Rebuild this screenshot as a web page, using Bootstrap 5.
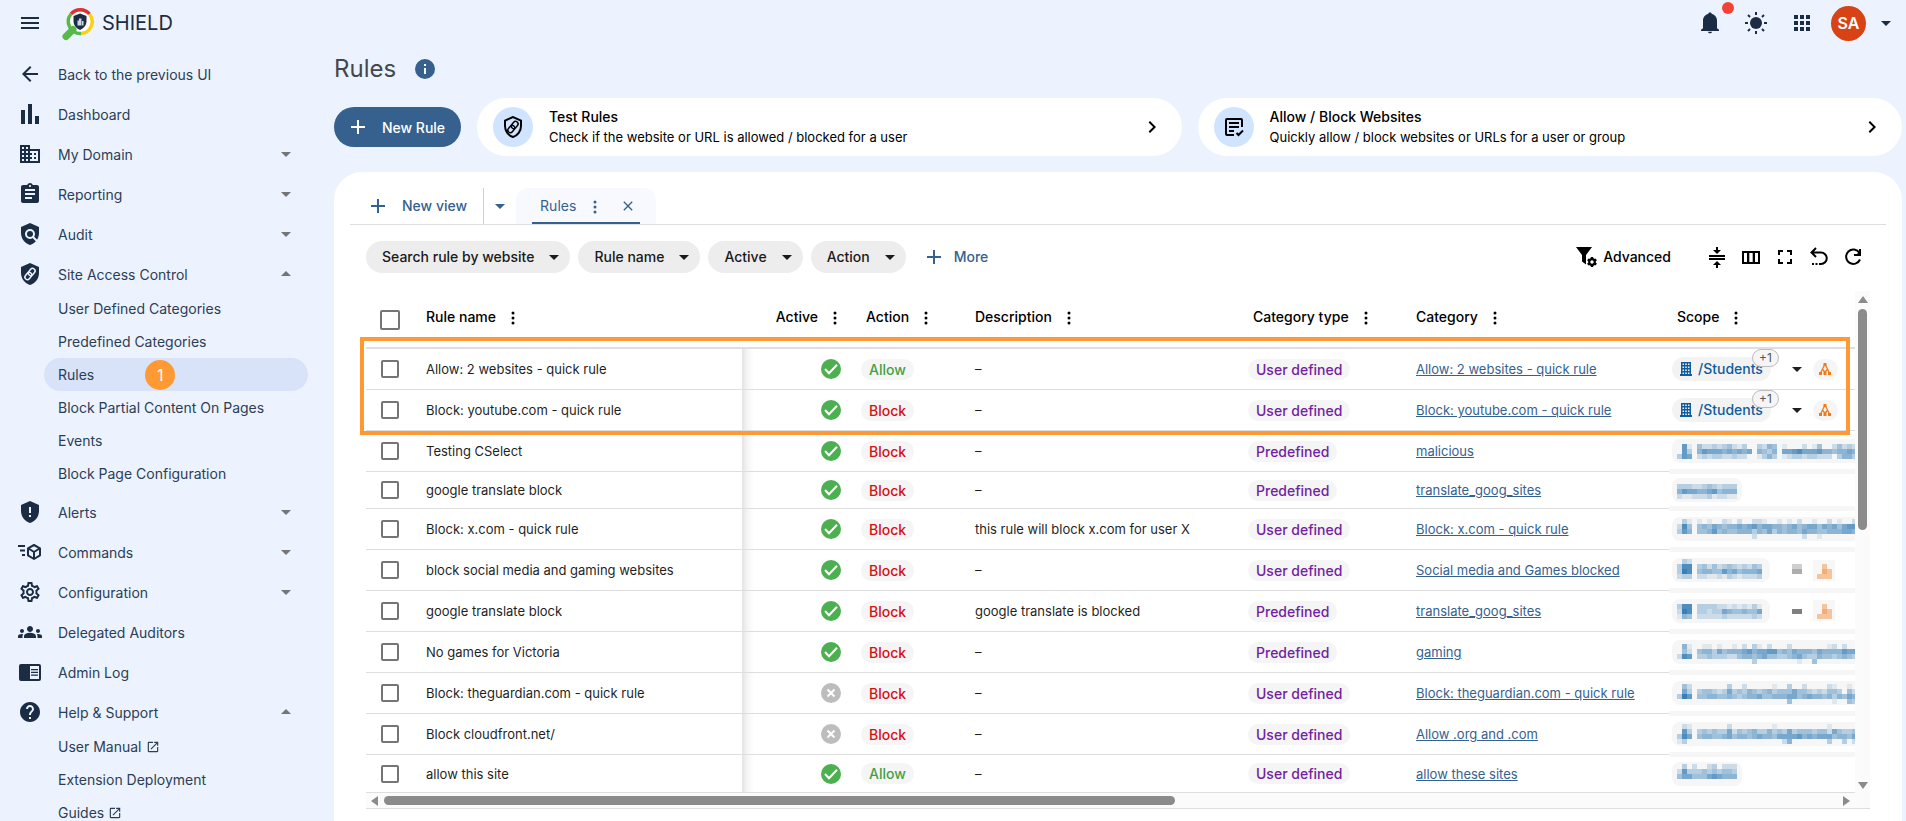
<!DOCTYPE html>
<html lang="en">
<head>
<meta charset="utf-8">
<meta name="viewport" content="width=device-width, initial-scale=1">
<title>SHIELD - Rules</title>
<link href="https://cdn.jsdelivr.net/npm/bootstrap@5.3.0/dist/css/bootstrap.min.css" rel="stylesheet">
<style>
:root{--navy:#1b2d45;--blue:#36618e;--page:#ecf3ff;--line:#dedede;--mark:#ff9933}
body{background:var(--page);font-family:Inter,"Liberation Sans",sans-serif;font-size:14px;line-height:20px;color:#000}
svg{display:block;flex:none;fill:currentColor}
svg.logo{fill:none}
.i24{width:24px;height:24px}.i16{width:16px;height:16px}.i14{width:14px;height:14px}
button{color:inherit}
.plain{border:0;background:none;padding:0}
.medium{font-weight:500}
.topbar{height:46px;color:var(--navy);padding:0 8px 0 18px}
.brand{font-size:20px;line-height:24px;color:var(--navy);text-decoration:none;gap:6px}
.tools{gap:22px}
.dot{position:absolute;width:12px;height:12px;border-radius:50%;background:#f44336;top:-9px;right:-12px}
.account{gap:8px;margin-left:-5px}
.avatar{width:35px;height:35px;border-radius:50%;background:#d84315;color:#fff;font-weight:600;font-size:16px}
.side{width:334px;padding:10px 26px 0 18px;color:var(--navy)}
.side li{margin-bottom:4px}
.side a{color:#2b3e56;text-decoration:none}
.side .top-item{height:36px;gap:16px;padding-right:10px}
.side .top-item span{padding-top:2px}
.side .top-item svg{color:var(--navy)}
.side .top-item .caret{color:#757575}
.side .sub-item{height:33px;margin-left:26px;padding-left:14px;border-radius:17px;gap:4px}
.side .sub-item.on{background:#d8e2f9}
.side .sub-list li{margin:0}
.step{width:30px;height:30px;border-radius:50%;background:var(--mark);color:#fff;font-size:16px;margin-left:47px}
.work{padding-right:4px}
.page-title{font-size:24px;line-height:30px;font-weight:400;color:#44474e;height:46px;gap:17px}
.page-title svg{color:var(--blue)}
.actions{margin-top:6px}
.btn-new{width:127px;height:40px;border-radius:20px;background:var(--blue);color:#fff;font-size:14px;font-weight:500;gap:12px;padding:0 4px 0 0}
.btn-new:hover{background:#2a4f76;color:#fff}
.quick{flex:1 1 0;min-width:0;height:58px;border-radius:29px;background:#fff;color:#000;text-decoration:none;padding:0 18px 0 16px;gap:16px}
.quick strong{font-weight:500}
.quick .desc{font-size:13px;line-height:21px}
.quick .disc{width:40px;height:40px;border-radius:50%;background:#d1e4ff}
.panel{background:#fff;border-radius:28px 28px 0 0;padding:16px 16px 0;margin-top:16px}
.tabs{border-bottom:1px solid var(--line);color:var(--blue);height:37px}
.newview{padding:0 16px 0 16px;gap:12px;border-right:1px solid #d0d0d0;height:36px}
.view{width:140px;height:36px;background:#f8f9ff;border-radius:12px 12px 0 0;padding:0 16px}
.view .in{border-bottom:2px solid var(--blue);height:36px;padding:2px 0 0 8px}
.view .in button+button{margin-left:21px}
.view .in a+button{margin-left:15px}
.filters{padding:16px 21px 18px 16px}
.filters .blue{color:var(--blue)}
.iconset{gap:10px}
.chip{height:32px;border-radius:16px;background:#ededed;border:0;color:#1a1a1a;padding:0 4px 0 16px;gap:8px;font-weight:500}
.gridbox{margin:0 16px;position:relative}
.rules{width:100%;table-layout:fixed;border-collapse:separate;border-spacing:0;font-size:13px;line-height:18px}
.rules .c-pick{width:46px}.rules .c-name{width:330px}.rules .c-active{width:110px}.rules .c-action{width:109px}
.rules .c-type{width:163px}.rules .c-cat{width:267px}.rules .c-scope{width:186px}
.rules th{height:58px;border-bottom:2px solid var(--line);font-weight:500;font-size:14px;padding:0 0 4px 14px;white-space:nowrap}
.rules th span{gap:13px}
.rules td{height:41px;border-bottom:1px solid var(--line);padding:0 0 0 14px;white-space:nowrap;color:#1f1f1f}
.rules tr.short td{height:37px}
.rules tr.short:last-child td{height:38px}
.rules .pick{padding:0 0 0 15px;vertical-align:middle}
.rules .pillcell{padding-left:9px}
.rules td.state{padding-right:9px;padding-left:0;background:linear-gradient(90deg,#e3e3e3,#f4f4f4 5px,#fff) 0 0/12px 100% no-repeat}
.rules th.scope{padding-left:8px}
.rules td.scope{padding-left:3px}
.rules td.hidden-scope{border-bottom-color:#f6f6f6;box-shadow:inset 0 -2px #f6f6f6,0 2px #f6f6f6}
.rules th.state{padding-right:13px;padding-left:0}
.rules a{color:var(--blue);text-decoration:underline}
.tick{appearance:none;display:block;width:18px;height:18px;border:2px solid #757575;border-radius:2px;margin:0;background:#fff}
.tick:checked{background:var(--blue)}
th .tick{width:20px;height:20px;margin:2px 0 0 -1px}
.pill{display:inline-block;height:21px;line-height:22px;border-radius:11px;background:#f5f5f5;padding:0 8px;font-size:14px;font-weight:500}
.allow{color:#43a047}.block{color:#d50f12}.kind{color:#7222a0}
.who{height:24px;border-radius:12px;background:#f3f3f3;color:#0f5c9e;padding:0 8px;gap:6px;font-size:14px;font-weight:500;position:relative}
.who+button{margin:0 4px 0 14px}
.more{position:absolute;right:-8px;top:-8px;height:18px;border:1px solid #bdbdbd;border-radius:9px;background:#f5f5f5;color:#555;font-size:12px;font-weight:400;line-height:16px;padding:0 6px}
.tree{width:25px;height:21px;border-radius:11px;background:#f5f5f5;color:#ef7a1a}
.frame{position:absolute;left:-6px;right:5px;top:46px;height:98px;border:4px solid var(--mark);pointer-events:none}
.vbar{width:15px;background:#fbfbfb;padding:5px 0 4px;color:#8b8b8b}
.vbar .thumb{width:9px;height:221px;border-radius:5px;background:#8b8b8b;margin-top:6px}
.hbar{height:16px;background:#fbfbfb;border-bottom:1px solid var(--line);padding:0 20px 0 5px;color:#8b8b8b}
.hbar .thumb{width:calc(54% - 8px);height:9px;border-radius:5px;background:#8b8b8b;margin-left:6px}
</style>
</head>
<body class="vh-100 overflow-hidden d-flex flex-column">
<svg width="0" height="0" class="position-absolute" aria-hidden="true"><defs>
<symbol id="menu" viewBox="0 0 24 24"><path d="M3 18h18v-2H3v2zm0-5h18v-2H3v2zm0-7v2h18V6H3z"/></symbol>
<symbol id="back" viewBox="0 0 24 24"><path d="M20 11H7.83l5.59-5.59L12 4l-8 8 8 8 1.41-1.41L7.83 13H20v-2z"/></symbol>
<symbol id="bars" viewBox="0 0 24 24"><path d="M3 8h4v14H3zM10 2h4v20h-4zM17 14h4v8h-4z"/></symbol>
<symbol id="domain" viewBox="0 0 24 24"><path d="M12 7V3H2v18h20V7H12zM6 19H4v-2h2v2zm0-4H4v-2h2v2zm0-4H4V9h2v2zm0-4H4V5h2v2zm4 12H8v-2h2v2zm0-4H8v-2h2v2zm0-4H8V9h2v2zm0-4H8V5h2v2zm10 12h-8v-2h2v-2h-2v-2h2v-2h-2V9h8v10zm-2-8h-2v2h2v-2zm0 4h-2v2h2v-2z"/></symbol>
<symbol id="report" viewBox="0 0 24 24"><path d="M19 3h-4.18C14.4 1.84 13.3 1 12 1c-1.3 0-2.4.84-2.82 2H5c-1.1 0-2 .9-2 2v14c0 1.1.9 2 2 2h14c1.1 0 2-.9 2-2V5c0-1.1-.9-2-2-2zm-7 0c.55 0 1 .45 1 1s-.45 1-1 1-1-.45-1-1 .45-1 1-1zm2 14H7v-2h7v2zm3-4H7v-2h10v2zm0-4H7V7h10v2z"/></symbol>
<symbol id="audit" viewBox="0 0 24 24"><path d="M12 1 3 5v6c0 5.55 3.84 10.74 9 12 5.16-1.26 9-6.45 9-12V5l-9-4z"/><circle cx="12" cy="12" r="4" fill="none" stroke="#ecf3ff" stroke-width="2"/><path d="m14.500 14.500 5 5" stroke="#ecf3ff" stroke-width="2"/></symbol>
<symbol id="chain" viewBox="0 0 24 24"><g fill="none" stroke-width="1.500" transform="rotate(-50 12 12)"><rect x="5.500" y="9.500" width="7.800" height="5" rx="2.500"/><rect x="10.700" y="9.500" width="7.800" height="5" rx="2.500"/></g></symbol>
<symbol id="access" viewBox="0 0 24 24"><path d="M12 1 3 5v6c0 5.55 3.84 10.74 9 12 5.16-1.26 9-6.45 9-12V5l-9-4z"/><use href="#chain" stroke="#ecf3ff"/></symbol>
<symbol id="accessline" viewBox="0 0 24 24"><path d="M12 2 4 5.600V11c0 5 3.400 9.600 8 11 4.600-1.400 8-6 8-11V5.600z" fill="none" stroke="currentColor" stroke-width="2"/><use href="#chain" stroke="currentColor"/></symbol>
<symbol id="alert" viewBox="0 0 24 24"><path d="M12 1 3 5v6c0 5.55 3.84 10.74 9 12 5.16-1.26 9-6.45 9-12V5l-9-4z"/><path d="M11 7h2v6h-2zM11 15h2v2h-2z" fill="#ecf3ff"/></symbol>
<symbol id="command" viewBox="0 0 24 24"><path d="M0 5h7v2H0zM2 9.500h5v2H2zM4 14h3v2H4z"/><path d="m16 5 6 3.300v7L16 19l-6-3.700v-7zM10.500 8.500 16 12l5.500-3.500M16 12v7" fill="none" stroke="currentColor" stroke-width="2" stroke-linejoin="round"/></symbol>
<symbol id="gear" viewBox="0 0 24 24"><path d="M19.43 12.98c.04-.32.07-.64.07-.98 0-.34-.03-.66-.07-.98l2.11-1.65c.19-.15.24-.42.12-.64l-2-3.46c-.09-.16-.26-.25-.44-.25-.06 0-.12.01-.17.03l-2.49 1c-.52-.4-1.08-.73-1.69-.98l-.38-2.65C14.46 2.180 14.250 2 14 2h-4c-.25 0-.46.18-.49.42l-.38 2.65c-.61.25-1.170.59-1.690.98l-2.490-1c-.06-.02-.12-.03-.18-.03-.17 0-.34.09-.43.25l-2 3.460c-.13.22-.07.49.12.64l2.110 1.650c-.04.32-.07.65-.07.98 0 .33.03.66.07.98l-2.110 1.650c-.19.15-.24.42-.12.64l2 3.460c.09.16.26.25.44.25.06 0 .12-.01.17-.03l2.490-1c.52.4 1.080.73 1.690.98l.38 2.650c.03.24.24.42.49.42h4c.25 0 .46-.18.49-.42l.38-2.650c.61-.25 1.170-.59 1.690-.98l2.490 1c.06.02.12.03.18.03.17 0 .34-.09.43-.25l2-3.460c.12-.22.07-.49-.12-.64l-2.110-1.650zm-1.980-1.710c.04.31.05.52.05.73 0 .21-.02.43-.05.73l-.14 1.130.89.7 1.080.84-.7 1.210-1.270-.51-1.040-.42-.9.68c-.43.32-.84.56-1.250.73l-1.060.43-.16 1.130-.2 1.350h-1.400l-.19-1.350-.16-1.130-1.060-.43c-.43-.18-.83-.41-1.230-.71l-.91-.7-1.060.43-1.270.51-.7-1.210 1.080-.84.89-.7-.14-1.130c-.03-.31-.05-.54-.05-.74s.02-.43.05-.73l.14-1.130-.89-.7-1.080-.84.7-1.210 1.270.51 1.040.42.9-.68c.43-.32.84-.56 1.250-.73l1.060-.43.16-1.130.2-1.350h1.390l.19 1.350.16 1.130 1.060.43c.43.18.83.41 1.230.71l.91.7 1.060-.43 1.270-.51.7 1.210-1.070.85-.89.7.14 1.130zM12 8c-2.210 0-4 1.790-4 4s1.790 4 4 4 4-1.790 4-4-1.790-4-4-4zm0 6c-1.100 0-2-.9-2-2s.9-2 2-2 2 .9 2 2-.9 2-2 2z"/></symbol>
<symbol id="groups" viewBox="0 0 24 24"><path d="M12 12.750c1.630 0 3.070.39 4.240.9 1.080.48 1.760 1.560 1.760 2.730V18H6v-1.610c0-1.180.68-2.260 1.760-2.730 1.170-.52 2.610-.91 4.240-.91zM4 13c1.100 0 2-.9 2-2s-.9-2-2-2-2 .9-2 2 .9 2 2 2zm1.130 1.100c-.37-.06-.74-.1-1.130-.1-.99 0-1.930.21-2.780.58C.48 14.900 0 15.620 0 16.430V18h4.500v-1.610c0-.83.23-1.610.63-2.290zM20 13c1.100 0 2-.9 2-2s-.9-2-2-2-2 .9-2 2 .9 2 2 2zm4 3.430c0-.81-.48-1.530-1.220-1.850-.85-.37-1.790-.58-2.780-.58-.39 0-.76.04-1.130.1.4.68.63 1.460.63 2.290V18H24v-1.570zM12 6c1.660 0 3 1.340 3 3s-1.340 3-3 3-3-1.340-3-3 1.340-3 3-3z"/></symbol>
<symbol id="reader" viewBox="0 0 24 24"><path fill-rule="evenodd" d="M3 4h18a2 2 0 0 1 2 2v13a2 2 0 0 1-2 2H3a2 2 0 0 1-2-2V6a2 2 0 0 1 2-2zm9 2v13h9V6zm1 3h7v1.300h-7zm0 2.700h7V13h-7zm0 2.800h7v1.300h-7z"/></symbol>
<symbol id="help" viewBox="0 0 24 24"><path d="M12 2C6.480 2 2 6.480 2 12s4.480 10 10 10 10-4.480 10-10S17.520 2 12 2zm1 17h-2v-2h2v2zm2.070-7.750l-.9.92C13.450 12.900 13 13.500 13 15h-2v-.5c0-1.100.45-2.100 1.170-2.830l1.240-1.260c.37-.36.59-.86.59-1.410 0-1.100-.9-2-2-2s-2 .9-2 2H8c0-2.210 1.790-4 4-4s4 1.790 4 4c0 .88-.36 1.680-.93 2.250z"/></symbol>
<symbol id="open" viewBox="0 0 24 24"><path d="M19 19H5V5h7V3H5c-1.110 0-2 .9-2 2v14c0 1.100.89 2 2 2h14c1.100 0 2-.9 2-2v-7h-2v7zM14 3v2h3.590l-9.830 9.830 1.410 1.410L19 6.410V10h2V3h-7z"/></symbol>
<symbol id="down" viewBox="0 0 24 24"><path d="m7 10 5 5 5-5z"/></symbol>
<symbol id="up" viewBox="0 0 24 24"><path d="m7 14 5-5 5 5z"/></symbol>
<symbol id="plus" viewBox="0 0 24 24"><path d="M19 13h-6v6h-2v-6H5v-2h6V5h2v6h6v2z"/></symbol>
<symbol id="close" viewBox="0 0 24 24"><path d="M19 6.410 17.590 5 12 10.590 6.410 5 5 6.410 10.590 12 5 17.590 6.410 19 12 13.410 17.590 19 19 17.590 13.410 12z"/></symbol>
<symbol id="dots" viewBox="0 0 8 20"><circle cx="4" cy="6" r="1.500"/><circle cx="4" cy="11" r="1.500"/><circle cx="4" cy="16" r="1.500"/></symbol>
<symbol id="bell" viewBox="0 0 24 24"><path d="M12 1.500c-1 0-1.500.5-1.700 1.300C7.200 3.700 5 6.300 5 9.500v7.700l-2 1.600V20h18v-1.200l-2-1.600V9.500c0-3.200-2.200-5.800-5.300-6.700-.2-.8-.7-1.300-1.700-1.300zM10 20.800h4c0 1-1 1.500-2 1.500s-2-.5-2-1.500z"/></symbol>
<symbol id="sun" viewBox="0 0 24 24"><circle cx="12" cy="12" r="6"/><path d="M12 1v3M12 20v3M1 12h3M20 12h3M4 4l2 2M18 18l2 2M20 4l-2 2M6 18l-2 2" stroke="currentColor" stroke-width="2"/></symbol>
<symbol id="apps" viewBox="0 0 24 24"><path d="M4 4h4v4H4zM10 4h4v4h-4zM16 4h4v4h-4zM4 10h4v4H4zM10 10h4v4h-4zM16 10h4v4h-4zM4 16h4v4H4zM10 16h4v4h-4zM16 16h4v4h-4z"/></symbol>
<symbol id="info" viewBox="0 0 24 24"><circle cx="12" cy="12" r="10"/><path d="M11 7h2v2h-2zM11 11h2v6h-2z" fill="#fff"/></symbol>
<symbol id="next" viewBox="0 0 24 24"><path d="M10 6 8.590 7.410 13.170 12l-4.580 4.590L10 18l6-6z"/></symbol>
<symbol id="list" viewBox="0 0 24 24"><path d="M20 12V5a1 1 0 0 0-1-1H5a1 1 0 0 0-1 1v14a1 1 0 0 0 1 1h7M7 8h10M7 12h10M7 16h5M14.500 18l2 2 4.500-4.500" fill="none" stroke="currentColor" stroke-width="2"/></symbol>
<symbol id="funnel" viewBox="0 0 24 24"><path d="M1 2h16l-6 8v9.500l-4-3V10z"/><circle cx="17" cy="17" r="2.800" fill="none" stroke="currentColor" stroke-width="2.200"/><path d="M17 12v2M17 20v2M12.700 14.500l1.700 1M19.600 18.500l1.700 1M12.700 19.500l1.700-1M19.600 15.500l1.700-1" stroke="currentColor" stroke-width="2.400"/></symbol>
<symbol id="dense" viewBox="0 0 24 24"><path d="M4 10h16v2H4zM4 13h16v2H4zM11 2h2v3h3l-4 4-4-4h3zM11 23h2v-3h3l-4-4-4 4h3z"/></symbol>
<symbol id="columns" viewBox="0 0 24 24"><path fill-rule="evenodd" d="M3 6h18v13H3zm2 2v9h3V8zm5.300 0v9h3.400V8zM16 8v9h3V8z"/></symbol>
<symbol id="full" viewBox="0 0 24 24"><path d="M5 10V5h5v2H7v3zM14 5h5v5h-2V7h-3zM5 14h2v3h3v2H5zM17 14h2v5h-5v-2h3z"/></symbol>
<symbol id="undo" viewBox="0 0 24 24"><path d="M9 3 4.500 7.500 9 12M5 7.500h9a5.700 5.700 0 0 1 0 11.500h-2" fill="none" stroke="currentColor" stroke-width="2"/><path d="M5 18h2v2H5zM8.500 18h2v2h-2z"/></symbol>
<symbol id="reload" viewBox="0 0 24 24"><path d="M18.500 8A7.200 7.200 0 1 0 19 14.500" fill="none" stroke="currentColor" stroke-width="2"/><path d="M20 4v7h-7v-2h3l2-2V4z"/></symbol>
<symbol id="ok" viewBox="0 0 24 24"><circle cx="12" cy="12" r="10" fill="#4caf50"/><path d="m6 12 4 4.200 8-8.500" fill="none" stroke="#fff" stroke-width="2"/></symbol>
<symbol id="off" viewBox="0 0 24 24"><circle cx="12" cy="12" r="10" fill="#bdbdbd"/><path d="m8.500 8.500 7 7m0-7-7 7" fill="none" stroke="#fff" stroke-width="2"/></symbol>
<symbol id="tower" viewBox="0 0 12 14"><path fill-rule="evenodd" d="M1 0h10v12h1v2H0v-2h1zm1.500 1.500v1.500H4V1.500zm2.700 0v1.500h1.600V1.500zm2.800 0v1.500h1.500V1.500zM2.500 4.500V6H4V4.500zm2.700 0V6h1.600V4.500zm2.800 0V6h1.500V4.500zM2.500 7.500V9H4V7.500zm2.700 0V9h1.600V7.500zm2.800 0V9h1.500V7.500zM2.500 10.500V12H4v-1.500zm2.700 0V12h1.600v-1.500zm2.800 0V12h1.500v-1.500z"/></symbol>
<symbol id="tree" viewBox="0 0 12 12"><path d="M4.500 0h3v3h-3zM0 9h3v3H0zM4.500 9h3v3h-3zM9 9h3v3H9z"/><path d="M5.500 2 1.800 9.500M6.500 2l3.700 7.500M3.800 6.500 6 9.500M8.200 6.500 6 9.500" fill="none" stroke="currentColor" stroke-width="1.300"/></symbol>
</defs></svg>

<header class="topbar d-flex align-items-center flex-shrink-0">
  <button class="plain" type="button" aria-label="Menu"><svg class="i24"><use href="#menu"/></svg></button>
  <a class="brand d-flex align-items-center ms-3" href="#">
    <svg class="logo" width="38" height="36" viewBox="58 4 38 36">
      <circle cx="80" cy="20.500" r="12" fill="#fff"/>
      <path d="M66 35.500l7-7" stroke="#57b947" stroke-width="7" stroke-linecap="round"/>
      <path d="M71 13a12 12 0 0 1 18.500 0" stroke="#e0302e" stroke-width="3.500"/>
      <path d="M89.500 13A12 12 0 0 1 81 32.500" stroke="#fbd010" stroke-width="3.500"/>
      <path d="M81 32.500A12 12 0 0 1 71 13" stroke="#57b947" stroke-width="3.500"/>
      <path d="M80 12.500l6.500 2.500v5c0 4-2.800 7.500-6.500 9-3.700-1.500-6.500-5-6.500-9v-5z" fill="#1b2d45"/>
      <path d="M77.500 19.500h1.500v-2h2.500v7h-4zM82 20h1.500v4.500H82z" fill="#cfd6de"/>
    </svg>
    <span>SHIELD</span>
  </a>
  <div class="tools d-flex align-items-center ms-auto">
    <button class="plain position-relative" type="button" aria-label="Notifications"><svg class="i24"><use href="#bell"/></svg><span class="dot"></span></button>
    <button class="plain" type="button" aria-label="Theme"><svg class="i24"><use href="#sun"/></svg></button>
    <button class="plain" type="button" aria-label="Apps"><svg class="i24"><use href="#apps"/></svg></button>
    <button class="plain account d-flex align-items-center" type="button" aria-label="Account"><span class="avatar d-flex align-items-center justify-content-center">SA</span><svg class="i24"><use href="#down"/></svg></button>
  </div>
</header>

<div class="d-flex flex-grow-1 overflow-hidden">
  <nav class="side flex-shrink-0 overflow-hidden">
    <ul class="list-unstyled m-0" id="nav"></ul>
  </nav>
  <main class="work flex-grow-1 d-flex flex-column overflow-hidden">
    <h1 class="page-title d-flex align-items-center mb-0">Rules <svg class="i24"><use href="#info"/></svg></h1>
    <div class="actions d-flex align-items-center gap-3">
      <button class="btn btn-new d-flex align-items-center justify-content-center" type="button"><svg class="i24"><use href="#plus"/></svg>New Rule</button>
      <a class="quick d-flex align-items-center" href="#">
        <span class="disc d-flex align-items-center justify-content-center"><svg class="i24"><use href="#accessline"/></svg></span>
        <span class="flex-grow-1"><strong class="d-block">Test Rules</strong><span class="desc d-block">Check if the website or URL is allowed / blocked for a user</span></span>
        <svg class="i24"><use href="#next"/></svg>
      </a>
      <a class="quick d-flex align-items-center" href="#">
        <span class="disc d-flex align-items-center justify-content-center"><svg class="i24"><use href="#list"/></svg></span>
        <span class="flex-grow-1"><strong class="d-block">Allow / Block Websites</strong><span class="desc d-block">Quickly allow / block websites or URLs for a user or group</span></span>
        <svg class="i24"><use href="#next"/></svg>
      </a>
    </div>
    <section class="panel flex-grow-1">
      <div class="tabs d-flex">
        <button class="plain newview medium d-flex align-items-center" type="button"><svg class="i24"><use href="#plus"/></svg>New view</button>
        <button class="plain px-1" type="button" aria-label="View options"><svg class="i24"><use href="#down"/></svg></button>
        <div class="view"><div class="in d-flex align-items-center"><a href="#" class="text-reset text-decoration-none">Rules</a><button class="plain" type="button" aria-label="View menu"><svg width="8" height="20"><use href="#dots"/></svg></button><button class="plain" type="button" aria-label="Close view"><svg class="i16"><use href="#close"/></svg></button></div></div>
      </div>
      <div class="filters d-flex align-items-center gap-2">
        <button class="chip d-flex align-items-center" type="button">Search rule by website<svg class="i24"><use href="#down"/></svg></button>
        <button class="chip d-flex align-items-center" type="button">Rule name<svg class="i24"><use href="#down"/></svg></button>
        <button class="chip d-flex align-items-center" type="button">Active<svg class="i24"><use href="#down"/></svg></button>
        <button class="chip d-flex align-items-center" type="button">Action<svg class="i24"><use href="#down"/></svg></button>
        <button class="plain blue medium d-flex align-items-center ms-2 gap-2" type="button"><svg class="i24"><use href="#plus"/></svg>More</button>
        <div class="iconset d-flex align-items-center ms-auto">
          <button class="plain medium d-flex align-items-center gap-1 me-4" type="button"><svg class="i24"><use href="#funnel"/></svg>Advanced</button>
          <button class="plain" type="button" aria-label="Row density"><svg class="i24"><use href="#dense"/></svg></button>
          <button class="plain" type="button" aria-label="Columns"><svg class="i24"><use href="#columns"/></svg></button>
          <button class="plain" type="button" aria-label="Full screen"><svg class="i24"><use href="#full"/></svg></button>
          <button class="plain" type="button" aria-label="Undo"><svg class="i24"><use href="#undo"/></svg></button>
          <button class="plain" type="button" aria-label="Refresh"><svg class="i24"><use href="#reload"/></svg></button>
        </div>
      </div>
      <div class="gridbox">
        <div class="d-flex">
          <div class="flex-grow-1 position-relative">
            <div class="overflow-hidden">
              <table class="rules">
                <colgroup><col class="c-pick"><col class="c-name"><col class="c-active"><col class="c-action"><col><col class="c-type"><col class="c-cat"><col class="c-scope"></colgroup>
                <thead><tr id="head"></tr></thead>
                <tbody id="body"></tbody>
              </table>
            </div>
            <div class="frame"></div>
          </div>
          <div class="vbar d-flex flex-column align-items-center flex-shrink-0">
            <svg width="10" height="7"><path d="M5 0l5 7H0z"/></svg>
            <div class="thumb"></div>
            <svg class="mt-auto" width="10" height="7"><path d="M5 7l5-7H0z"/></svg>
          </div>
        </div>
        <div class="hbar d-flex align-items-center">
          <svg width="7" height="10"><path d="M0 5l7-5v10z"/></svg>
          <div class="thumb"></div>
          <svg class="ms-auto" width="7" height="10"><path d="M7 5L0 0v10z"/></svg>
        </div>
      </div>
    </section>
  </main>
</div>
<script>
const icon = (n, c = 'i24') => `<svg class="${c}"><use href="#${n}"/></svg>`;

// Navigation: icon, label, expanded state, children
const nav = [
  ['back', 'Back to the previous UI'], ['bars', 'Dashboard'], ['domain', 'My Domain', 'down'],
  ['report', 'Reporting', 'down'], ['audit', 'Audit', 'down'],
  ['access', 'Site Access Control', 'up', ['User Defined Categories', 'Predefined Categories', '*Rules', 'Block Partial Content On Pages', 'Events', 'Block Page Configuration']],
  ['alert', 'Alerts', 'down'], ['command', 'Commands', 'down'], ['gear', 'Configuration', 'down'],
  ['groups', 'Delegated Auditors'], ['reader', 'Admin Log'],
  ['help', 'Help & Support', 'up', ['User Manual>', 'Extension Deployment', 'Guides>']]
];
document.getElementById('nav').innerHTML = nav.map(([i, t, s, kids]) => `<li>
  <a href="#" class="top-item d-flex align-items-center">${icon(i)}<span class="flex-grow-1">${t.replace('&', '&amp;')}</span>${s ? icon(s, 'i24 caret') : ''}</a>
  ${kids ? '<ul class="list-unstyled sub-list">' + kids.map(k => `<li><a href="#" class="sub-item d-flex align-items-center ${k[0] == '*' ? 'on' : ''}">${k.replace(/[*>]/g, '')}${k.endsWith('>') ? icon('open', 'i14') : ''}${k[0] == '*' ? '<span class="step d-flex align-items-center justify-content-center">1</span>' : ''}</a></li>`).join('') + '</ul>' : ''}</li>`).join('');

// Column headings
document.getElementById('head').innerHTML = '<th class="pick"><input type="checkbox" class="tick" aria-label="Select all"></th>' +
  [['Rule name', ''], ['Active', 'state'], ['Action', ''], ['Description', ''], ['Category type', ''], ['Category', ''], ['Scope', 'scope']]
  .map(([t, c]) => `<th class="${c}"><span class="d-flex align-items-center ${c == 'state' ? 'justify-content-end' : ''}">${t}<svg width="8" height="20"><use href="#dots"/></svg></span></th>`).join('');

// Redacted scopes: each digit is the strength of one block
const masks = {
  a: ['.71.4223234213..3254.1...2.14..24232', '.73.57666565656.5435.667866675545565', '376.2323322322..1353.1233233222.3553'],
  b: ['333223432333', '576655674555', '211222312211'],
  c: ['.31.1.1..21.2..221..1.1.2..1..2.1..2', '284.45465455656756655456456646564677', '375.44574544555354635455465544555665', '...............2.........2..1.......'],
  d: ['.32..............', '388.3424234323243', '398.4554475645556', '233.2211213212223'],
  e: ['388.3333221212131', '298.3323365445446', '154.2222232222232'],
  f: ['.51..11.1..1.2.31.2...2.......12.2..', '.42.45536455567566774546555465555766', '287.33433322455456443345643354434543', '...............3........1..4........'],
  g: ['.42.......3..2.....1..3..2....21..1.', '.63.34432363435434534446443232443.42', '397.44554454345564455566456554535465', '......................4........1..43'],
  h: ['.21.......2........1..........1.....', '.73.34343362434533534363444344264334', '386.45544564554565546666756566645546', '13...................25.......3..3.2'],
  i: ['.3.2..23.222', '273334343443', '466444676555']
};
// distance of the first block row from the top of the 24px scope cell
const tops = {a: 5, b: 6, c: 2, d: 1, e: 5, f: 4, g: 3, h: 2, i: 2};
const mosaic = key => masks[key].map((row, y) => [...row].map((n, x) => n > 0 ? `<rect x="${x * 5}" y="${y * 5}" width="5" height="5" fill="rgba(15,101,170,${n / 11})"/>` : '').join('')).join('');
function redacted(key) {
  const wide = masks[key][0].length > 30, withTree = key == 'd' || key == 'e';
  const w = wide ? 194 : withTree ? 98 : 70;
  const t = key == 'd' ? 5 : 0;
  return `<svg width="183" height="24"><rect width="${w}" height="24" rx="8" fill="#f6f6f6"/><g transform="translate(5 ${tops[key]})" shape-rendering="crispEdges">${mosaic(key)}` +
    (withTree ? `<path d="M115 5h10v5h-10z" fill="${t ? '#cfcfcf' : '#808080'}"/>${t ? '<path d="M115 10h10v5h-10z" fill="#adadad"/>' : ''}<g transform="translate(0 ${t})"><path d="M136-4h22v21h-22z" fill="#f7f7f7"/><path d="M145 0h5v5h5v10h-15v-5h5z" fill="#f4c49c"/><path d="M145 5h5v5h-5z" fill="#f2ae78"/></g>` : '') + '</g></svg>';
}

// name, active, action, description, category type, category, scope
const rules = [
  ['Allow: 2 websites - quick rule', 1, 'Allow', '', 'User defined', 'Allow: 2 websites - quick rule', ''],
  ['Block: youtube.com - quick rule', 1, 'Block', '', 'User defined', 'Block: youtube.com - quick rule', ''],
  ['Testing CSelect', 1, 'Block', '', 'Predefined', 'malicious', 'a'],
  ['google translate block', 1, 'Block', '', 'Predefined', 'translate_goog_sites', 'b', 1],
  ['Block: x.com - quick rule', 1, 'Block', 'this rule will block x.com for user X', 'User defined', 'Block: x.com - quick rule', 'c'],
  ['block social media and gaming websites', 1, 'Block', '', 'User defined', 'Social media and Games blocked', 'd'],
  ['google translate block', 1, 'Block', 'google translate is blocked', 'Predefined', 'translate_goog_sites', 'e'],
  ['No games for Victoria', 1, 'Block', '', 'Predefined', 'gaming', 'f'],
  ['Block: theguardian.com - quick rule', 0, 'Block', '', 'User defined', 'Block: theguardian.com - quick rule', 'g'],
  ['Block cloudfront.net/', 0, 'Block', '', 'User defined', 'Allow .org and .com', 'h'],
  ['allow this site', 1, 'Allow', '', 'User defined', 'allow these sites', 'i', 1]
];
document.getElementById('body').innerHTML = rules.map(([n, on, act, d, k, cat, sc, short], i) => `<tr class="${short ? 'short' : ''}">
  <td class="pick"><input type="checkbox" class="tick" aria-label="Select ${n}"></td>
  <td>${n}</td>
  <td class="state"><span class="d-flex justify-content-end">${icon(on ? 'ok' : 'off')}</span></td>
  <td class="pillcell"><span class="pill ${act.toLowerCase()}">${act}</span></td>
  <td>${d || '–'}</td>
  <td class="pillcell"><span class="pill kind">${k}</span></td>
  <td><a href="#">${cat}</a></td>
  <td class="scope ${sc && i < rules.length - 1 ? 'hidden-scope' : ''}">${sc ? redacted(sc) : `<div class="d-flex align-items-center"><span class="who d-flex align-items-center"><svg width="12" height="14"><use href="#tower"/></svg>/Students<span class="more">+1</span></span><button class="plain" type="button" aria-label="More scopes">${icon('down')}</button><span class="tree d-flex align-items-center justify-content-center"><svg width="12" height="12"><use href="#tree"/></svg></span></div>`}</td></tr>`).join('');
</script>
<script src="https://cdn.jsdelivr.net/npm/bootstrap@5.3.0/dist/js/bootstrap.bundle.min.js"></script>
</body>
</html>
